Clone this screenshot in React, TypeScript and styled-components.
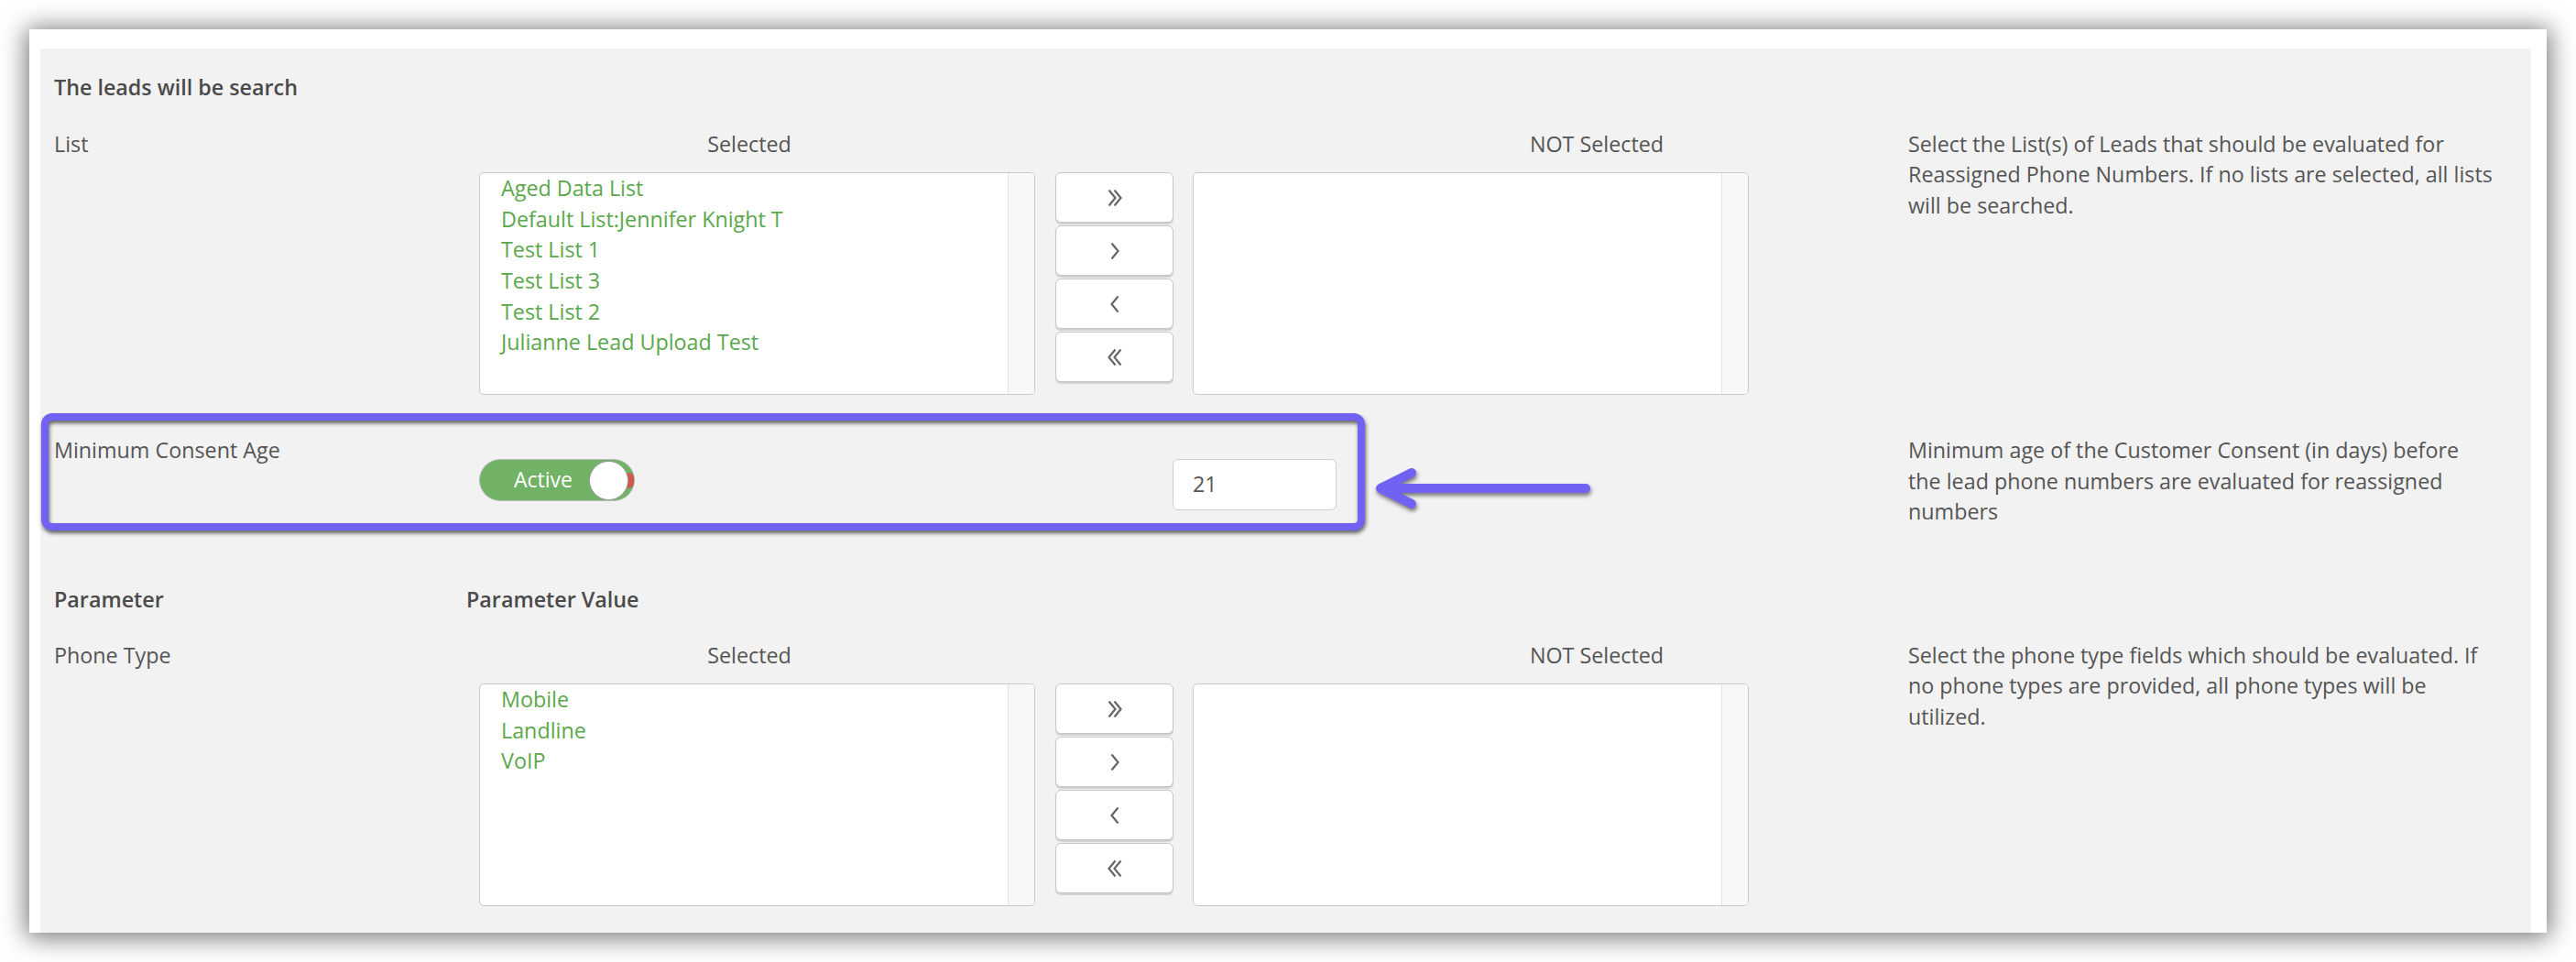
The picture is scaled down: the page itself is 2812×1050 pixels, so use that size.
import React from "react";
import styled, { createGlobalStyle } from "styled-components";

const GlobalStyle = createGlobalStyle`
  html, body { margin: 0; padding: 0; background: #ffffff; }
  body {
    font-family: "Open Sans", "Noto Sans", sans-serif;
    color: #555555;
    font-size: 23.3px;
    line-height: 33.6px;
  }
  * { box-sizing: border-box; }
`;

const Page = styled.div`
  padding: 32px;
`;

const Card = styled.div`
  width: 2748px;
  height: 986px;
  background: #ffffff;
  box-shadow: 0 2px 26px 3px rgba(0, 0, 0, 0.55);
  padding: 21px 17px 0 12px;
`;

const Panel = styled.div`
  background: #f2f2f2;
  height: 100%;
  padding: 26px 25px 26px 15px;
`;

const SectionTitle = styled.div`
  font-weight: 600;
  color: #4a4a4a;
`;

const FieldRow = styled.div<{ $mt: number }>`
  position: relative;
  display: grid;
  grid-template-columns: 464px 1560px 652px;
  align-items: start;
  margin-top: ${(p) => p.$mt}px;
`;

const ParamHeader = styled.div<{ $mt: number }>`
  display: grid;
  grid-template-columns: 450px 1fr;
  font-weight: 600;
  color: #4a4a4a;
  margin-top: ${(p) => p.$mt}px;
`;

const Label = styled.div`
  color: #555555;
`;

const Description = styled.div`
  color: #555555;
`;

const ContentCell = styled.div<{ $pt?: number }>`
  padding-top: ${(p) => p.$pt ?? 0}px;
`;

const ColumnHeads = styled.div`
  display: grid;
  grid-template-columns: 590px 660px;
  column-gap: 300px;
  text-align: center;
  margin-bottom: 14px;
`;

const DualList = styled.div`
  display: flex;
  align-items: flex-start;
`;

const ListBox = styled.div`
  width: 607px;
  height: 243px;
  background: #ffffff;
  border: 1px solid #c9c9c9;
  border-radius: 5px;
  display: flex;
  overflow: hidden;
`;

const ListItems = styled.ul`
  flex: 1;
  margin: 0;
  padding: 0 0 0 23px;
  list-style: none;
  color: #5ba84c;
`;

const ScrollTrack = styled.div`
  width: 29px;
  background: #f8f8f8;
  border-left: 1px solid #e4e4e4;
`;

const MoveButtons = styled.div`
  display: flex;
  flex-direction: column;
  gap: 3px;
  margin: 0 21px 0 22px;
`;

const MoveButton = styled.button`
  width: 129px;
  height: 55px;
  background: #ffffff;
  border: 1px solid #c6c6c6;
  border-radius: 6px;
  box-shadow: 0 2px 1px rgba(0, 0, 0, 0.14);
  display: flex;
  align-items: center;
  justify-content: center;
  padding: 0;
  cursor: pointer;
`;

const ControlsLine = styled.div`
  display: grid;
  grid-template-columns: 757px 179px;
  align-items: start;
`;

const Toggle = styled.div`
  position: relative;
  width: 170px;
  height: 46px;
  border-radius: 23px;
  background: #72b266;
  border: 1px solid #b9b9b9;
  display: flex;
  align-items: center;
  overflow: hidden;
`;

const ToggleText = styled.span`
  color: #ffffff;
  font-size: 23px;
  padding-left: 37px;
  flex: 1;
`;

const Knob = styled.span`
  width: 43px;
  height: 43px;
  border-radius: 50%;
  background: #ffffff;
  border: 1px solid #9a9a9a;
  margin-right: 6px;
  box-shadow: 21px 0 0 -13px #d2584c;
`;

const NumberInput = styled.div`
  width: 179px;
  height: 56px;
  background: #ffffff;
  border: 1px solid #cfcfcf;
  border-radius: 6px;
  padding-left: 21px;
  display: flex;
  align-items: center;
  color: #555555;
`;

const Highlight = styled.div`
  position: absolute;
  left: -14px;
  top: -24px;
  width: 1445px;
  height: 128px;
  border: 8px solid #7162f4;
  border-radius: 12px;
  filter: drop-shadow(1px 3px 2px rgba(0, 0, 0, 0.6));
  pointer-events: none;
`;

const ArrowMark = styled.svg`
  position: absolute;
  left: 1436px;
  top: 33px;
  width: 245px;
  height: 50px;
  overflow: visible;
  filter: drop-shadow(1px 3px 2px rgba(0, 0, 0, 0.5));
`;

const Chevron = ({ kind }: { kind: "rr" | "r" | "l" | "ll" }) => {
  const stroke = "#666666";
  const right = "M0 0 L7 8.5 L0 17";
  const left = "M7 0 L0 8.5 L7 17";
  return (
    <svg width="20" height="20" viewBox="-1 -1.5 20 20" fill="none">
      {kind === "rr" && (
        <>
          <path d={right} transform="translate(2.5 0)" stroke={stroke} strokeWidth="2.2" />
          <path d={right} transform="translate(8.5 0)" stroke={stroke} strokeWidth="2.2" />
        </>
      )}
      {kind === "r" && <path d={right} transform="translate(5.5 0)" stroke={stroke} strokeWidth="2.2" />}
      {kind === "l" && <path d={left} transform="translate(5.5 0)" stroke={stroke} strokeWidth="2.2" />}
      {kind === "ll" && (
        <>
          <path d={left} transform="translate(2.5 0)" stroke={stroke} strokeWidth="2.2" />
          <path d={left} transform="translate(8.5 0)" stroke={stroke} strokeWidth="2.2" />
        </>
      )}
    </svg>
  );
};

const Picker = ({ items }: { items: string[] }) => (
  <>
    <ColumnHeads>
      <div>Selected</div>
      <div>NOT Selected</div>
    </ColumnHeads>
    <DualList>
      <ListBox>
        <ListItems>
          {items.map((it) => (
            <li key={it}>{it}</li>
          ))}
        </ListItems>
        <ScrollTrack />
      </ListBox>
      <MoveButtons>
        <MoveButton aria-label="Move all">
          <Chevron kind="rr" />
        </MoveButton>
        <MoveButton aria-label="Move">
          <Chevron kind="r" />
        </MoveButton>
        <MoveButton aria-label="Move back">
          <Chevron kind="l" />
        </MoveButton>
        <MoveButton aria-label="Move all back">
          <Chevron kind="ll" />
        </MoveButton>
      </MoveButtons>
      <ListBox>
        <ListItems />
        <ScrollTrack />
      </ListBox>
    </DualList>
  </>
);

export default function App() {
  return (
    <>
      <GlobalStyle />
      <Page>
        <Card>
          <Panel>
            <SectionTitle>The leads will be search</SectionTitle>

            <FieldRow $mt={28}>
              <Label>List</Label>
              <ContentCell>
                <Picker
                  items={[
                    "Aged Data List",
                    "Default List:Jennifer Knight T",
                    "Test List 1",
                    "Test List 3",
                    "Test List 2",
                    "Julianne Lead Upload Test",
                  ]}
                />
              </ContentCell>
              <Description>
                Select the List(s) of Leads that should be evaluated for Reassigned Phone Numbers. If no lists are
                selected, all lists will be searched.
              </Description>
            </FieldRow>

            <FieldRow $mt={44}>
              <Label>Minimum Consent Age</Label>
              <ContentCell $pt={26}>
                <ControlsLine>
                  <div>
                    <Toggle>
                      <ToggleText>Active</ToggleText>
                      <Knob />
                    </Toggle>
                  </div>
                  <NumberInput>21</NumberInput>
                </ControlsLine>
              </ContentCell>
              <Description>
                Minimum age of the Customer Consent (in days) before
                <br />
                the lead phone numbers are evaluated for reassigned numbers
              </Description>
              <Highlight />
              <ArrowMark viewBox="0 0 245 50">
                <path
                  d="M46 8 L12 25 L46 42 M12 25 L236 25"
                  stroke="#7162f4"
                  strokeWidth="10"
                  strokeLinecap="round"
                  strokeLinejoin="round"
                  fill="none"
                />
              </ArrowMark>
            </FieldRow>

            <ParamHeader $mt={62}>
              <div>Parameter</div>
              <div>Parameter Value</div>
            </ParamHeader>

            <FieldRow $mt={27}>
              <Label>Phone Type</Label>
              <ContentCell>
                <Picker items={["Mobile", "Landline", "VoIP"]} />
              </ContentCell>
              <Description>
                Select the phone type fields which should be evaluated. If no phone types are provided, all phone
                types will be utilized.
              </Description>
            </FieldRow>
          </Panel>
        </Card>
      </Page>
    </>
  );
}
